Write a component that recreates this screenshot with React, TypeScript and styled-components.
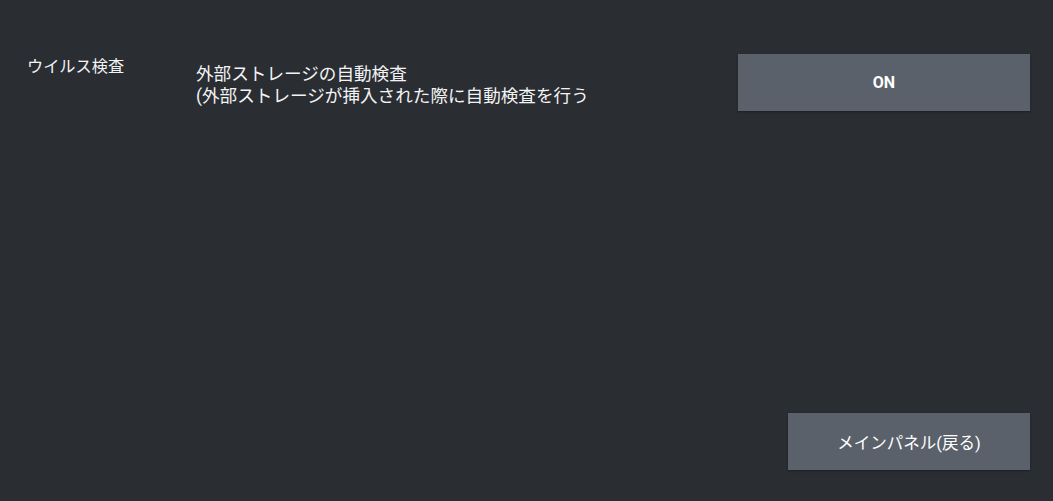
import React from 'react';
import styled, { createGlobalStyle } from 'styled-components';

const GlobalStyle = createGlobalStyle`
  html, body {
    margin: 0;
    padding: 0;
    height: 100%;
    background: #2a2d32;
  }
  #root {
    height: 100%;
  }
`;

const App = () => {
  return (
    <>
      <GlobalStyle />
      <Page>
        <SettingRow>
          <Label>ウイルス検査</Label>
          <Description>
            外部ストレージの自動検査
            <br />
            (外部ストレージが挿入された際に自動検査を行う
          </Description>
          <Button $width={292} $bold>ON</Button>
        </SettingRow>
        <Footer>
          <Button $width={242}>メインパネル(戻る)</Button>
        </Footer>
      </Page>
    </>
  );
};

export default App;

const Page = styled.div`
  box-sizing: border-box;
  height: 100vh;
  display: flex;
  flex-direction: column;
  padding: 54px 23px 31px 27px;
  font-family: Roboto, "Noto Sans CJK JP", sans-serif;
  color: #f2f3f4;
`;

const SettingRow = styled.div`
  display: flex;
  align-items: flex-start;
`;

const Label = styled.div`
  width: 169px;
  flex-shrink: 0;
  font-size: 16.2px;
  line-height: 24px;
  margin-top: 1px;
`;

const Description = styled.div`
  flex: 1;
  font-size: 17.6px;
  line-height: 22px;
  margin-top: 9px;
`;

const Footer = styled.div`
  margin-top: auto;
  display: flex;
  justify-content: flex-end;
`;

const Button = styled.button<{ $width: number; $bold?: boolean }>`
  width: ${({ $width }) => $width}px;
  height: 57px;
  flex-shrink: 0;
  border: none;
  background: #5a616a;
  color: #ffffff;
  font-family: Roboto, "Noto Sans CJK JP", sans-serif;
  font-size: ${({ $bold }) => ($bold ? 16 : 16.5)}px;
  font-weight: ${({ $bold }) => ($bold ? 700 : 400)};
  box-shadow: 0 1px 2px rgba(0, 0, 0, 0.35);
  cursor: pointer;
`;
